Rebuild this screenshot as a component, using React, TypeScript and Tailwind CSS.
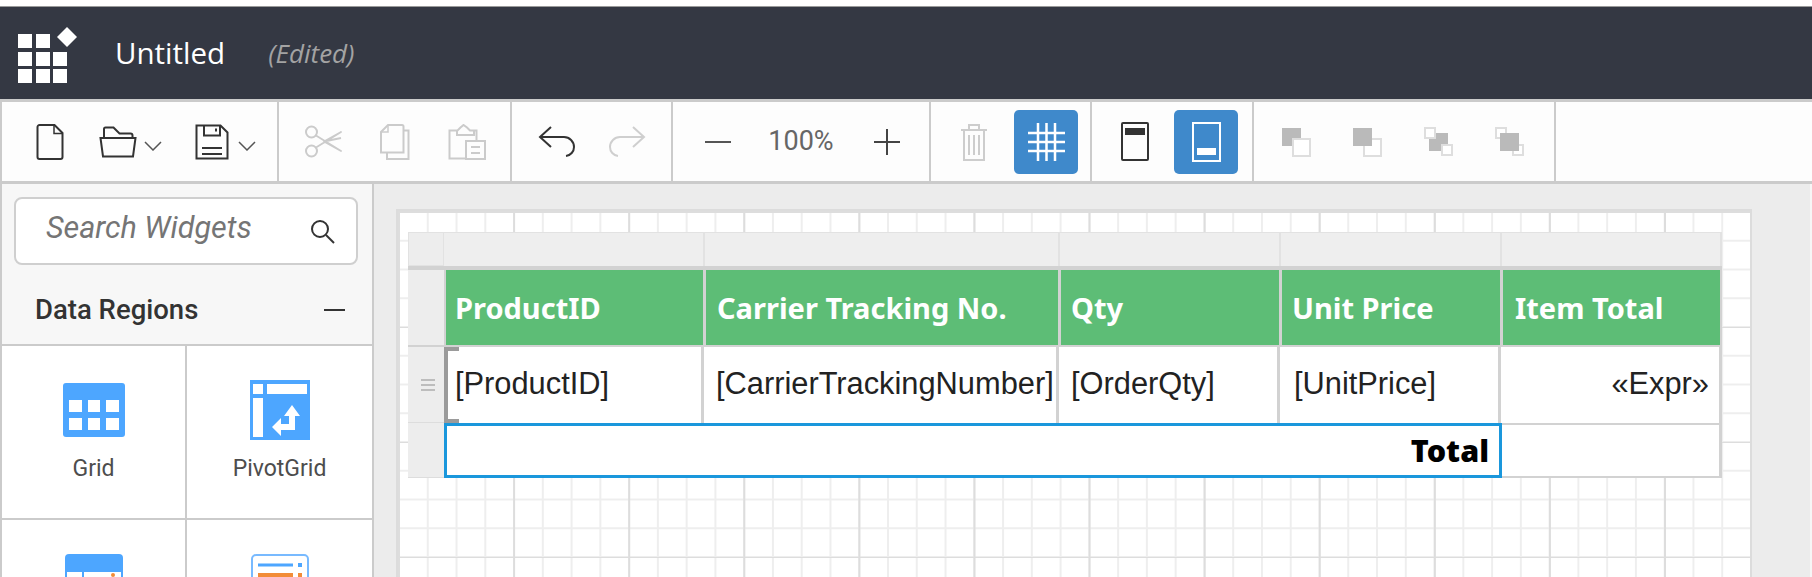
import React from "react";

type IconProps = { w: number; h: number; children: React.ReactNode; stroke?: string };

function Icon({ w, h, children, stroke = "#333" }: IconProps) {
  return (
    <svg width={w} height={h} viewBox={`0 0 ${w} ${h}`} fill="none" stroke={stroke} strokeWidth={2} className="shrink-0">
      {children}
    </svg>
  );
}

function Chevron() {
  return (
    <Icon w={18} h={10}>
      <path d="M1 1l8 8 8-8" stroke="#555" strokeWidth={1.5} />
    </Icon>
  );
}

function OrderIcon({ variant }: { variant: number }) {
  const dark = "#bababa";
  const line = "#dedede";
  return (
    <svg width="30" height="30" viewBox="0 0 30 30" className="shrink-0">
      {variant === 0 && (
        <>
          <rect x="0" y="1" width="19" height="18" fill={dark} />
          <rect x="11" y="12" width="17" height="17" fill="#fff" stroke={line} strokeWidth="2" />
        </>
      )}
      {variant === 1 && (
        <>
          <rect x="11" y="12" width="17" height="17" fill="#fff" stroke={line} strokeWidth="2" />
          <rect x="0" y="1" width="19" height="18" fill={dark} />
        </>
      )}
      {variant === 2 && (
        <>
          <rect x="5" y="6" width="19" height="18" fill={dark} />
          <rect x="1" y="1" width="10" height="10" fill="#fff" stroke={line} strokeWidth="2" />
          <rect x="18" y="18" width="10" height="10" fill="#fff" stroke={line} strokeWidth="2" />
        </>
      )}
      {variant === 3 && (
        <>
          <rect x="1" y="1" width="10" height="10" fill="#fff" stroke={line} strokeWidth="2" />
          <rect x="18" y="18" width="10" height="10" fill="#fff" stroke={line} strokeWidth="2" />
          <rect x="5" y="6" width="19" height="18" fill={dark} />
        </>
      )}
    </svg>
  );
}

function Divider() {
  return <div className="w-[2px] self-stretch bg-[#cbcbcb] shrink-0" />;
}

function Toolbar() {
  return (
    <div className="flex h-[85px] shrink-0 border-t-[3px] border-b-[3px] border-l-2 border-[#cbcbcb] bg-[#fdfdfd]">
      <div className="flex w-[275px] items-center pl-[34px]">
        <Icon w={28} h={36}>
          <path d="M1.500 3a2 2 0 0 1 2-2h15l8 8v24a2 2 0 0 1-2 2h-21a2 2 0 0 1-2-2z" />
          <path d="M18 1v8.500h8.500" strokeWidth={1.5} />
        </Icon>
        <div className="ml-[35px]">
          <Icon w={38} h={32}>
            <path d="M5 12V3a1.500 1.500 0 0 1 1.500-1.500h8l6 6h11a2 2 0 0 1 2 2V12" />
            <path d="M1.500 12h35l-2.500 18.500H4z" />
          </Icon>
        </div>
        <div className="ml-[7px] mt-[8px]"><Chevron /></div>
        <div className="ml-[33px]">
          <Icon w={34} h={36}>
            <path d="M1.500 1.500h24l7 7v26h-31z" />
            <path d="M9 1.500v10h16v-10M7 24h20M7 30h20" />
            <path d="M21 4.500v3" strokeWidth={2} />
          </Icon>
        </div>
        <div className="ml-[9px] mt-[8px]"><Chevron /></div>
      </div>
      <Divider />
      <div className="flex w-[231px] items-center pl-[26px]">
        <Icon w={37} h={33} stroke="#cbcbcb">
          <circle cx="6.500" cy="7" r="5.500" />
          <circle cx="6.500" cy="26" r="5.500" />
          <path d="M11 10.500L36 26 19 16.500 36 13M11 22.500L36 7 19 16.500" strokeWidth={1.8} strokeLinejoin="round" />
        </Icon>
        <div className="ml-[38px]">
          <Icon w={30} h={36} stroke="#cbcbcb">
            <path d="M1 28.500V8l7-7h14a1.500 1.500 0 0 1 1.500 1.500v26z" />
            <path d="M1 8h7V1" strokeWidth={1.5} />
            <path d="M23.500 6.500h5V35H7v-6.500" />
          </Icon>
        </div>
        <div className="ml-[38px]">
          <Icon w={38} h={36} stroke="#cbcbcb">
            <path d="M18 34.500H1.500V6.500h8l3-3 3-2.500 3.500 2.500 3 3h6.500V17" />
            <path d="M9 6.500v4.500h17V6.500" />
            <rect x="18" y="17" width="19" height="18" />
            <path d="M23 23h9M23 29h9" />
          </Icon>
        </div>
      </div>
      <Divider />
      <div className="flex w-[159px] items-center pl-[26px]">
        <Icon w={38} h={33}>
          <path d="M13 2L2 12l11 10M2 12h24a10 10 0 0 1 10 10 9 9 0 0 1-8 9" />
        </Icon>
        <div className="ml-[32px]">
          <Icon w={38} h={33} stroke="#cfcfcf">
            <path d="M25 2l11 10-11 10M36 12H12A10 10 0 0 0 2 22a9 9 0 0 0 8 9" />
          </Icon>
        </div>
      </div>
      <Divider />
      <div className="flex w-[256px] items-center pl-[32px]">
        <div className="h-[2px] w-[26px] bg-[#555]" />
        <span className="ml-[37px] w-[66px] text-center font-['Roboto',sans-serif] text-[27px] text-[#666]">100%</span>
        <div className="relative ml-[40px] h-[26px] w-[26px]">
          <div className="absolute left-0 top-[12px] h-[2px] w-[26px] bg-[#444]" />
          <div className="absolute left-[12px] top-0 h-[26px] w-[2px] bg-[#444]" />
        </div>
      </div>
      <Divider />
      <div className="flex w-[159px] items-center pl-[29px]">
        <Icon w={28} h={38} stroke="#cdcdcd">
          <path d="M1 7h26M9 7V2h10v5M4 7v30h20V7M9 12v20M14 12v20M19 12v20" />
        </Icon>
        <div className="ml-[26px] flex h-[64px] w-[64px] shrink-0 items-center justify-center rounded-[5px] bg-[#3f89cb]">
          <svg width="37" height="38" viewBox="0 0 37 38" stroke="#fff" strokeWidth="2.500" fill="none">
            <path d="M10 0v38M18.500 0v38M27 0v38M0 10h37M0 19h37M0 28h37" />
          </svg>
        </div>
      </div>
      <Divider />
      <div className="flex w-[160px] items-center pl-[29px]">
        <svg width="28" height="39" viewBox="0 0 28 39" fill="none" className="shrink-0">
          <rect x="1" y="1" width="26" height="37" stroke="#333" strokeWidth="2" rx="1" />
          <rect x="4" y="6" width="20" height="7" fill="#333" />
        </svg>
        <div className="ml-[25px] flex h-[64px] w-[64px] shrink-0 items-center justify-center rounded-[5px] bg-[#3f89cb]">
          <svg width="29" height="40" viewBox="0 0 29 40" fill="none">
            <rect x="1" y="1" width="27" height="38" stroke="#fff" strokeWidth="2" />
            <rect x="5" y="26" width="19" height="7" fill="#fff" />
          </svg>
        </div>
      </div>
      <Divider />
      <div className="flex w-[300px] items-center gap-[41px] pl-[28px]">
        <OrderIcon variant={0} />
        <OrderIcon variant={1} />
        <OrderIcon variant={2} />
        <OrderIcon variant={3} />
      </div>
      <Divider />
    </div>
  );
}

function Tile({ label, children }: { label?: string; children: React.ReactNode }) {
  return (
    <div className="flex flex-col items-center pt-[34px]">
      <div className="flex h-[60px] items-center">{children}</div>
      {label && <span className="mt-[15px] font-['Roboto',sans-serif] text-[23px] leading-[28px] text-[#4d4d4d]">{label}</span>}
    </div>
  );
}

function Sidebar() {
  return (
    <aside className="flex h-full w-[374px] shrink-0 flex-col border-l-2 border-r-2 border-[#cbcbcb] bg-[#f7f7f7]">
      <div className="shrink-0 pl-[12px] pr-[14px] pt-[13px]">
        <div className="flex h-[68px] items-center justify-between rounded-[8px] border-2 border-[#cfcfcf] bg-white pl-[30px] pr-[21px]">
          <span className="pb-[6px] font-['Roboto',sans-serif] text-[30.500px] italic text-[#757575]">Search Widgets</span>
          <svg width="25" height="25" viewBox="0 0 25 25" fill="none" stroke="#333" strokeWidth="2">
            <circle cx="10" cy="10" r="8" />
            <path d="M16 16l8 8" />
          </svg>
        </div>
      </div>
      <div className="flex h-[81px] shrink-0 items-center justify-between border-b-2 border-[#cbcbcb] pl-[33px] pr-[27px] pt-[10px]">
        <span className="font-['Roboto',sans-serif] text-[27.500px] font-medium text-[#333]">Data Regions</span>
        <div className="h-[2px] w-[21px] bg-[#333]" />
      </div>
      <div className="grid min-h-0 flex-1 grid-cols-[183px_1fr] grid-rows-[172px_1fr] gap-[2px] overflow-hidden bg-[#cbcbcb]">
        <div className="bg-white">
          <Tile label="Grid">
            <svg width="62" height="54" viewBox="0 0 62 54">
              <rect width="62" height="54" rx="3" fill="#4da6ff" />
              <g fill="#fff">
                <rect x="6" y="17" width="13" height="12" />
                <rect x="25" y="17" width="12" height="12" />
                <rect x="43" y="17" width="13" height="12" />
                <rect x="6" y="35" width="13" height="12" />
                <rect x="25" y="35" width="12" height="12" />
                <rect x="43" y="35" width="13" height="12" />
              </g>
            </svg>
          </Tile>
        </div>
        <div className="bg-white">
          <Tile label="PivotGrid">
            <svg width="60" height="60" viewBox="0 0 60 60">
              <rect width="60" height="60" fill="#4da6ff" />
              <g fill="#fff">
                <rect x="3" y="4" width="10" height="10" />
                <rect x="17" y="4" width="40" height="10" />
                <rect x="3" y="18" width="10" height="39" />
                <path d="M39 36h-5l8-11 8 11h-5v14H31v6l-9-9 9-9v6h8z" />
              </g>
            </svg>
          </Tile>
        </div>
        <div className="bg-white">
          <Tile>
            <svg width="58" height="60" viewBox="0 0 58 60">
              <rect width="58" height="60" rx="4" fill="#4da6ff" />
              <rect x="2" y="18" width="15" height="30" fill="#fff" />
              <rect x="19" y="18" width="37" height="30" fill="#fff" />
              <circle cx="48" cy="21" r="2" fill="#f28c38" />
            </svg>
          </Tile>
        </div>
        <div className="bg-white">
          <Tile>
            <svg width="58" height="60" viewBox="0 0 58 60" fill="none">
              <rect x="1" y="1" width="56" height="58" rx="4" stroke="#78baff" strokeWidth="2" />
              <path d="M7 11h35" stroke="#4da6ff" strokeWidth="3" />
              <rect x="47" y="9" width="4" height="4" fill="#4da6ff" />
              <path d="M7 21h35" stroke="#f28c38" strokeWidth="4" />
              <rect x="47" y="19" width="4" height="4" fill="#f28c38" />
            </svg>
          </Tile>
        </div>
      </div>
    </aside>
  );
}

const headCell = "flex items-center bg-[#5dbd76] font-['Noto_Sans',sans-serif] text-[29px] font-bold text-white";
const dataCell = "flex items-center whitespace-nowrap border-r-[3px] border-[#d2d2d2] bg-white pb-[2px] font-['Liberation_Sans',sans-serif] text-[30.800px] text-[#222]";

function ReportTable() {
  return (
    <div className="flex h-[246px] w-[1314px] flex-col">
      <div className="flex h-[34px] shrink-0">
        <div className="w-[36px] border border-[#e2e2e2] bg-[#ededed]" />
        <div className="w-[261px] border-r-2 border-t border-[#e2e2e2] bg-[#eeeeee]" />
        <div className="w-[355px] border-r-2 border-t border-[#e2e2e2] bg-[#eeeeee]" />
        <div className="w-[221px] border-r-2 border-t border-[#e2e2e2] bg-[#eeeeee]" />
        <div className="w-[221px] border-r-2 border-t border-[#e2e2e2] bg-[#eeeeee]" />
        <div className="flex-1 border-r-2 border-t border-[#e2e2e2] bg-[#eeeeee]" />
      </div>
      <div className="flex h-[81px] shrink-0 border-t-4 border-b-2 border-[#d2d2d2] bg-[#d2d2d2]">
        <div className="w-[38px] shrink-0 border-r-2 border-[#d2d2d2] bg-[#ededed]" />
        <div className="flex flex-1 gap-[3px] border-r-2 border-[#d2d2d2]">
          <div className={`${headCell} w-[257px] pl-[9px]`}>ProductID</div>
          <div className={`${headCell} w-[352px] pl-[11px]`}>Carrier Tracking No.</div>
          <div className={`${headCell} w-[218px] pl-[10px]`}>Qty</div>
          <div className={`${headCell} w-[218px] pl-[10px]`}>Unit Price</div>
          <div className={`${headCell} flex-1 pl-[12px]`}>Item Total</div>
        </div>
      </div>
      <div className="flex h-[76px] shrink-0">
        <div className="flex w-[36px] items-center justify-center border-b border-[#dddddd] bg-[#ededed] pl-[3px]">
          <div className="flex w-[14px] flex-col gap-[3px]">
            <div className="h-[2px] bg-[#bdbdbd]" />
            <div className="h-[2px] bg-[#bdbdbd]" />
            <div className="h-[2px] bg-[#bdbdbd]" />
          </div>
        </div>
        <div className={`${dataCell} relative h-full w-[260px] pl-[11px]`}>
          [ProductID]
          <div className="absolute left-0 top-0 h-full w-[15px] border-y-[4px] border-l-[4px] border-[#9b9b9b]" />
        </div>
        <div className={`${dataCell} w-[355px] pl-[12px]`}>[CarrierTrackingNumber]</div>
        <div className={`${dataCell} w-[221px] pl-[12px]`}>[OrderQty]</div>
        <div className={`${dataCell} w-[221px] pl-[14px]`}>[UnitPrice]</div>
        <div className={`${dataCell} flex-1 justify-end pr-[10px]`}>«Expr»</div>
      </div>
      <div className="flex h-[55px] shrink-0">
        <div className="w-[36px] border-b border-[#dddddd] bg-[#ededed]" />
        <div className="flex w-[1058px] items-center justify-end border-[3px] border-[#1a97dc] bg-white pr-[10px] font-['Noto_Sans',sans-serif] text-[30.500px] font-black text-black">Total</div>
        <div className="flex-1 border-y-2 border-r-[3px] border-[#d2d2d2] bg-white" />
      </div>
    </div>
  );
}

function Canvas() {
  return (
    <main className="min-w-0 flex-1 border-r-2 border-[#f6f6f6] bg-[#ececec] pl-[22px] pt-[25px]">
      <div className="h-[400px] w-[1356px] border-x-2 border-t-2 border-[#dcdcdc] bg-white bg-[linear-gradient(to_right,#dddddd_2px,transparent_2px),linear-gradient(to_bottom,#dddddd_2px,transparent_2px),linear-gradient(to_right,#eeeeee_2px,transparent_2px),linear-gradient(to_bottom,#eeeeee_2px,transparent_2px)] bg-[size:115.100px_115px,115.100px_115px,28.780px_28.750px,28.780px_28.750px] pl-[10px] pt-[21px]">
        <ReportTable />
      </div>
    </main>
  );
}

export default function App() {
  return (
    <div className="flex h-[577px] w-[1812px] flex-col overflow-hidden bg-white pt-[6px]">
      <header className="flex h-[93px] shrink-0 items-center border-t border-[#9a9a9a] bg-[#343843] pl-[18px]">
        <svg width="60" height="58" viewBox="0 0 60 58" className="mt-[5px]" fill="#fff">
          <rect x="0" y="7" width="14" height="14" />
          <rect x="18" y="7" width="14" height="14" />
          <path d="M49 0l10 10-10 10-10-10z" />
          <rect x="0" y="25" width="14" height="14" />
          <rect x="18" y="25" width="14" height="14" />
          <rect x="35" y="25" width="14" height="14" />
          <rect x="0" y="42" width="14" height="14" />
          <rect x="18" y="42" width="14" height="14" />
          <rect x="35" y="42" width="14" height="14" />
        </svg>
        <span className="ml-[37px] font-['Open_Sans',sans-serif] text-[29.500px] text-white">Untitled</span>
        <span className="ml-[43px] font-['Open_Sans',sans-serif] text-[26px] italic text-[#a3a3a3]">(Edited)</span>
      </header>
      <Toolbar />
      <div className="flex min-h-0 flex-1">
        <Sidebar />
        <Canvas />
      </div>
    </div>
  );
}
